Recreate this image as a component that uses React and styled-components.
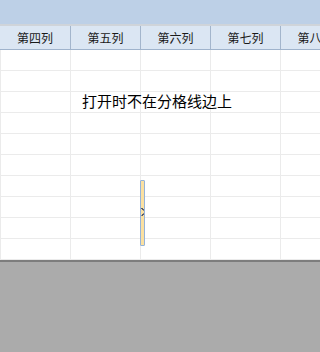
import React from "react";
import styled, { createGlobalStyle } from "styled-components";

const Global = createGlobalStyle`
  html, body { margin: 0; padding: 0; background: #ababab; }
  body { font-family: "Noto Sans CJK SC", "Liberation Sans", sans-serif; }
`;

const Page = styled.div`
  width: 320px;
  height: 352px;
  overflow: hidden;
  background: #ababab;
  display: flex;
  flex-direction: column;
`;

const TopBand = styled.div`
  height: 24px;
  background: #bdd0e7;
  border-bottom: 2px solid #cfd4da;
`;

const Sheet = styled.div`
  position: relative;
  background: #ffffff;
  border-bottom: 2px solid #7d7d7d;
  overflow: hidden;
`;

const HeaderRow = styled.div`
  display: grid;
  grid-template-columns: repeat(5, 70px);
  height: 23px;
  background: #dbe6f3;
  border-bottom: 1px solid #9fb3cc;
`;

const HeaderCell = styled.div`
  border-left: ${(p) => (p.$first ? "none" : "1px solid #a3b5cc")};
  font-size: 12px;
  line-height: 23px;
  color: #1a1a1a;
  text-align: center;
  white-space: nowrap;
`;

const Row = styled.div`
  display: grid;
  grid-template-columns: repeat(5, 70px);
  height: 21px;
  border-bottom: 1px solid #ebebeb;
  box-sizing: border-box;
`;

const Cell = styled.div`
  border-left: 1px solid #ebebeb;
`;

const Caption = styled.div`
  position: absolute;
  left: 82px;
  top: 65px;
  font-size: 15px;
  line-height: 20px;
  color: #000;
  white-space: nowrap;
`;

const Splitter = styled.div`
  position: absolute;
  left: 140px;
  top: 154px;
  width: 3px;
  height: 64px;
  background: #fbe0a0;
  border: 1px solid #95b3d9;
  border-radius: 1px;
`;

const headers = ["第四列", "第五列", "第六列", "第七列", "第八列"];

export default function App() {
  const rows = Array.from({ length: 10 });
  return (
    <Page>
      <Global />
      <TopBand />
      <Sheet>
        <HeaderRow>
          {headers.map((h, j) => (
            <HeaderCell key={h} $first={j === 0}>{h}</HeaderCell>
          ))}
        </HeaderRow>
        {rows.map((_, i) => (
          <Row key={i}>
            {headers.map((h) => (
              <Cell key={h} />
            ))}
          </Row>
        ))}
        <Caption>打开时不在分格线边上</Caption>
        <Splitter>
          <svg width="4" height="8" viewBox="0 0 4 8" style={{ position: "absolute", left: 0, top: 27 }}>
            <path d="M0 0h1v1h1v1h1M3 6h-1v1h-1v1" stroke="#1f2e5a" strokeWidth="1" fill="none" />
          </svg>
        </Splitter>
      </Sheet>
    </Page>
  );
}
